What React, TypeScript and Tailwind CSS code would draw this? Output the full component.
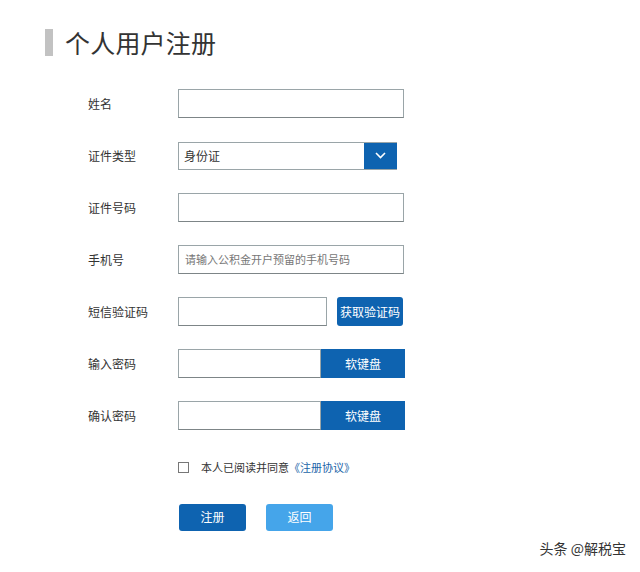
import React from 'react';

const font = { fontFamily: '"Noto Sans CJK SC", "Noto Sans", sans-serif' };

function Label({ children }: { children: React.ReactNode }) {
  return <div className="w-[90px] shrink-0 text-[12px] text-[#333]">{children}</div>;
}

const inputBox = 'h-[29px] border border-[#9aa5a8] border-b-[#7d8587] bg-white';

export default function App() {
  return (
    <div className="relative w-[640px] h-[572px] bg-white text-[#333]" style={font}>
      {/* page title */}
      <div className="flex items-center pt-[29px] pl-[45px]">
        <div className="w-[8px] h-[27px] bg-[#c2c2c2]" />
        <h1 className="ml-[12px] text-[25px] leading-none text-[#333] tracking-[0.2px]">个人用户注册</h1>
      </div>

      <div className="mt-[33px] pl-[88px] flex flex-col gap-[23px]">
        <div className="flex items-center h-[29px]">
          <Label>姓名</Label>
          <div className={`${inputBox} w-[226px]`} />
        </div>

        <div className="flex items-center h-[29px]">
          <Label>证件类型</Label>
          <div className="flex h-[28px] w-[219px] border border-[#9aa5a8] border-r-0">
            <div className="flex-1 flex items-center pl-[5px] text-[12px]">身份证</div>
            <div className="w-[33px] bg-[#0e63b0] flex items-center justify-center">
              <svg width="11" height="7" viewBox="0 0 11 7" fill="none">
                <path d="M1 1l4.5 4.5L10 1" stroke="white" strokeWidth="1.6" />
              </svg>
            </div>
          </div>
        </div>

        <div className="flex items-center h-[29px]">
          <Label>证件号码</Label>
          <div className={`${inputBox} w-[226px]`} />
        </div>

        <div className="flex items-center h-[29px]">
          <Label>手机号</Label>
          <div className={`${inputBox} w-[226px] flex items-center pl-[6px] text-[11px] text-[#777]`}>
            请输入公积金开户预留的手机号码
          </div>
        </div>

        <div className="flex items-center h-[29px]">
          <Label>短信验证码</Label>
          <div className={`${inputBox} w-[149px]`} />
          <button className="ml-[10px] w-[66px] h-[29px] rounded-[3px] bg-[#0e63b0] text-white text-[12px]">
            获取验证码
          </button>
        </div>

        <div className="flex items-center h-[29px]">
          <Label>输入密码</Label>
          <div className={`${inputBox} w-[143px]`} />
          <button className="w-[84px] h-[29px] bg-[#0e63b0] text-white text-[12px]">软键盘</button>
        </div>

        <div className="flex items-center h-[29px]">
          <Label>确认密码</Label>
          <div className={`${inputBox} w-[143px]`} />
          <button className="w-[84px] h-[29px] bg-[#0e63b0] text-white text-[12px]">软键盘</button>
        </div>
      </div>

      <div className="mt-[29px] pl-[178px] flex items-center">
        <div className="w-[11px] h-[11px] border border-[#777]" />
        <span className="ml-[12px] text-[11px] text-[#333]">
          本人已阅读并同意<span className="text-[#1a64a8]">《注册协议》</span>
        </span>
      </div>

      <div className="mt-[28px] pl-[179px] flex items-center gap-[20px]">
        <button className="w-[67px] h-[27px] rounded-[3px] bg-[#0e63b0] text-white text-[12px]">注册</button>
        <button className="w-[67px] h-[27px] rounded-[3px] bg-[#45a5ea] text-white text-[12px]">返回</button>
      </div>

      <div className="absolute right-[14px] bottom-[13px] text-[14px] text-[#333]">头条 @解税宝</div>
    </div>
  );
}
